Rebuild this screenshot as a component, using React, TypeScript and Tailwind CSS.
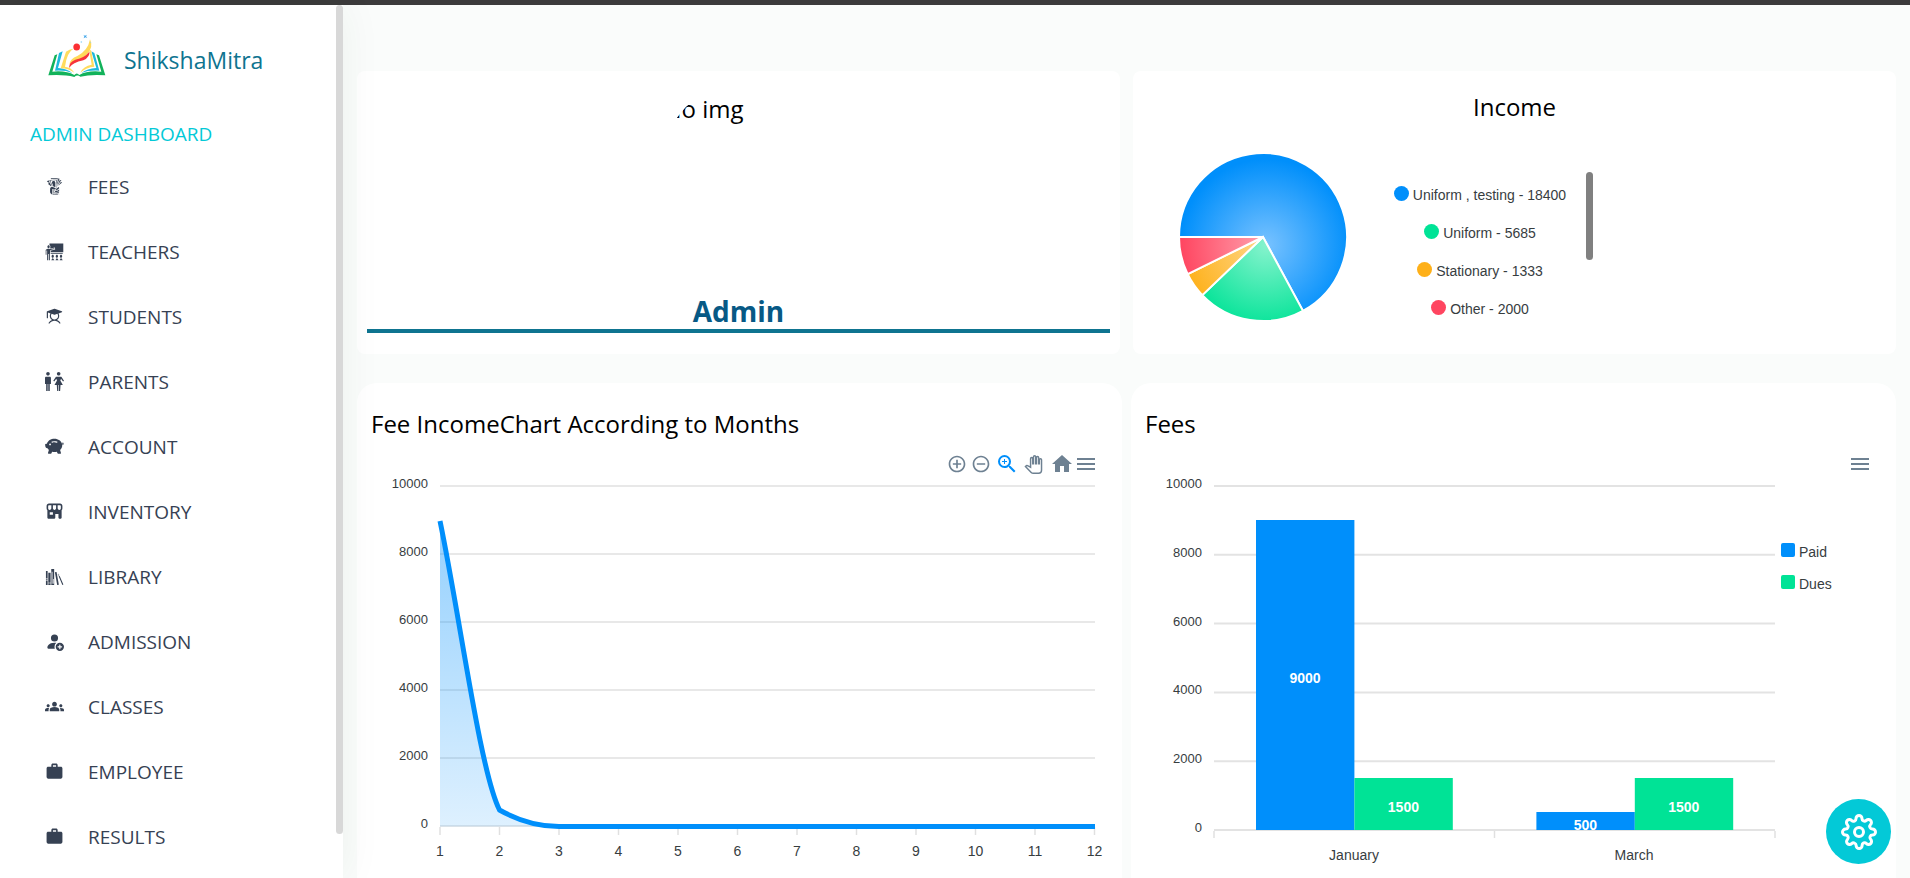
import React from "react";
import { GiBookshelf, GiTakeMyMoney, GiTeacher } from "react-icons/gi";
import { PiStudentFill } from "react-icons/pi";
import { ImManWoman } from "react-icons/im";
import { BsPersonFillAdd, BsPiggyBankFill } from "react-icons/bs";
import { MdAddCircleOutline, MdGroups, MdHome, MdMenu, MdRemoveCircleOutline, MdWork, MdZoomIn } from "react-icons/md";
import { BiSolidStoreAlt } from "react-icons/bi";
import { FiSettings } from "react-icons/fi";

const navItems = [
  { label: "FEES", Icon: GiTakeMyMoney },
  { label: "TEACHERS", Icon: GiTeacher },
  { label: "STUDENTS", Icon: PiStudentFill },
  { label: "PARENTS", Icon: ImManWoman },
  { label: "ACCOUNT", Icon: BsPiggyBankFill },
  { label: "INVENTORY", Icon: BiSolidStoreAlt },
  { label: "LIBRARY", Icon: GiBookshelf },
  { label: "ADMISSION", Icon: BsPersonFillAdd },
  { label: "CLASSES", Icon: MdGroups },
  { label: "EMPLOYEE", Icon: MdWork },
  { label: "RESULTS", Icon: MdWork },
];

function Logo() {
  return (
    <svg width="80" height="60" viewBox="0 0 240 180" aria-hidden="true" className="shrink-0">
      <path d="M44 88 L52 85 L37 137 Q78 133 103 147 Q110 138 118 147 Q142 133 184 137 L169 85 L177 88 L196 148 Q150 145 121 152 Q112 145 103 153 Q72 145 25 148 Z" fill="#12b25a" />
      <path d="M57 81 L68 76 L54 126 Q80 127 97 141 Q76 132 45 134 Z" fill="#1db9dc" />
      <path d="M163 81 L154 76 L169 126 Q142 127 124 141 Q146 132 178 134 Z" fill="#1db9dc" />
      <path d="M78 77 Q88 70 100 68 Q80 80 75 122 Q94 124 103 140 Q84 127 62 127 Z" fill="#ffdc5e" />
      <path d="M148 74 L153 72 L163 122 Q140 123 121 140 Q130 120 155 116 Z" fill="#ffdc5e" />
      <path d="M150 40 Q162 64 140 86 Q116 108 88 116 Q90 98 112 90 Q144 74 150 40 Z" fill="#ffd95a" />
      <path d="M148 77 Q151 92 130 103 Q98 109 87 126 Q87 108 106 101 Q134 95 148 77 Z" fill="#f7323a" />
      <ellipse cx="110" cy="63" rx="10" ry="10.500" fill="#fb2f33" />
      <path d="M130 26 L135 29 L141 26 L138 31 L142 36 L136 34 L131 37 L133 31 Z" fill="#41a6ea" />
      <circle cx="124" cy="48" r="2.500" fill="#8fd3f5" />
      <circle cx="152" cy="49" r="1.500" fill="#8fd3f5" />
    </svg>
  );
}

function Sidebar() {
  return (
    <aside className="relative z-10 flex w-[343px] shrink-0 bg-white shadow-[0_0_40px_rgba(20,60,40,0.06)]">
      <div className="min-w-0 flex-1 overflow-hidden">
        <a href="#home" className="mt-[21px] flex items-center gap-1 pl-10">
          <Logo />
          <span className="pt-2 text-[23px] leading-9 text-[#0e7490]">ShikshaMitra</span>
        </a>
        <h2 className="mt-[34px] pl-[30px] text-[19px] leading-7 text-[#03c9d7]">ADMIN DASHBOARD</h2>
        <nav className="mt-[6px]">
          {navItems.map(({ label, Icon }) => (
            <a key={label} href={"#" + label.toLowerCase()} className="flex h-[65px] items-center gap-6 pl-[45px] text-[19px] leading-7 text-gray-700">
              <Icon className="shrink-0" />
              <span>{label}</span>
            </a>
          ))}
        </nav>
      </div>
      <div className="h-[95%] w-[7px] rounded-full bg-[#d8d8d8]" />
    </aside>
  );
}

function ProfileCard() {
  return (
    <section className="rounded-lg bg-white px-[10px] pt-[14px] pb-[21px]">
      <div className="mx-auto h-[150px] w-[150px] overflow-hidden rounded-full pt-[6px] text-2xl leading-9">No img</div>
      <p className="mt-[58px] border-b-4 border-[#0e7490] text-center text-[28px] leading-9 font-bold text-[#075985]">Admin</p>
    </section>
  );
}

const income = [
  { name: "Uniform , testing", value: 18400, color: "#008ffb", tint: "#78c2ff", dot: "bg-[#008ffb]" },
  { name: "Uniform", value: 5685, color: "#00e396", tint: "#86f3cd", dot: "bg-[#00e396]" },
  { name: "Stationary", value: 1333, color: "#feb019", tint: "#ffd88c", dot: "bg-[#feb019]" },
  { name: "Other", value: 2000, color: "#ff4560", tint: "#ffa2af", dot: "bg-[#ff4560]" },
];

function Pie() {
  const total = income.reduce((sum, s) => sum + s.value, 0);
  const point = (turn: number) => {
    const a = turn * 2 * Math.PI - Math.PI;
    return `${(84 * Math.cos(a)).toFixed(2)} ${(84 * Math.sin(a)).toFixed(2)}`;
  };
  let start = 0;
  return (
    <svg width="170" height="170" viewBox="-85 -85 170 170" role="img" aria-label="Income by category">
      {income.map((s, i) => {
        const end = start + s.value / total;
        const d = `M0 0 L${point(start)} A84 84 0 ${end - start > 0.5 ? 1 : 0} 1 ${point(end)} Z`;
        start = end;
        return (
          <g key={s.name}>
            <radialGradient id={"slice" + i} gradientUnits="userSpaceOnUse" cx="3" cy="8" r="86">
              <stop offset="0" stopColor={s.tint} />
              <stop offset="1" stopColor={s.color} />
            </radialGradient>
            <path d={d} fill={`url(#slice${i})`} stroke="#fff" strokeWidth="2" />
          </g>
        );
      })}
    </svg>
  );
}

function IncomeCard() {
  return (
    <section className="rounded-lg bg-white pt-[18px]">
      <h2 className="text-center text-2xl leading-9">Income</h2>
      <div className="mt-[27px] flex items-start pl-[45px] font-['Liberation_Sans',Arial,sans-serif]">
        <Pie />
        <ul className="mt-6 ml-[26px] flex w-[212px] flex-col items-center text-sm text-[#373d3f]">
          {income.map((s) => (
            <li key={s.name} className="flex h-[38px] items-center gap-1">
              <span className={"mb-1 h-[15px] w-[15px] rounded-full " + s.dot} />
              {s.name} - {s.value}
            </li>
          ))}
        </ul>
        <div className="mt-5 h-[88px] w-[7px] rounded-full bg-[#808080]" />
      </div>
    </section>
  );
}

function ToolButton({ label, className = "", children }: { label: string; className?: string; children: React.ReactNode }) {
  return (
    <button type="button" aria-label={label} className={"flex h-6 w-6 items-center justify-center " + className}>
      {children}
    </button>
  );
}

const ticks = [10000, 8000, 6000, 4000, 2000, 0];

function LineChart() {
  return (
    <svg viewBox="0 0 737 430" className="block h-auto w-full font-['Liberation_Sans',Arial,sans-serif]" role="img" aria-label="Fee income by month">
      <defs>
        <linearGradient id="area" x1="0" y1="0" x2="0" y2="1">
          <stop offset="0" stopColor="#008ffb" stopOpacity="0.42" />
          <stop offset="1" stopColor="#008ffb" stopOpacity="0.13" />
        </linearGradient>
      </defs>
      {ticks.map((t, i) => (
        <g key={t}>
          <line x1="69" x2="724" y1={10 + i * 68} y2={10 + i * 68} stroke="#e8e8e8" strokeWidth="2" />
          <text x="57" y={12 + i * 68} textAnchor="end" fontSize="13" fill="#373d3f">{t}</text>
        </g>
      ))}
      {Array.from({ length: 12 }, (_, i) => (
        <g key={i}>
          <line x1={69 + i * 59.5} x2={69 + i * 59.5} y1="351" y2="359" stroke="#e0e0e0" strokeWidth="1.500" />
          <text x={69 + i * 59.5} y="380" textAnchor="middle" fontSize="14" fill="#373d3f">{i + 1}</text>
        </g>
      ))}
      <path d="M69 45 C89 141 109 295 128.500 334 C148 345 168 350.500 188 350.500 H69 Z" fill="url(#area)" />
      <path d="M69 45 C89 141 109 295 128.500 334 C148 345 168 350.500 188 350.500 H724" fill="none" stroke="#008ffb" strokeWidth="5" />
    </svg>
  );
}

const feeBars = [
  { x: 111, top: 44, value: 9000, labelY: 207, color: "#008ffb" },
  { x: 209.4, top: 302, value: 1500, labelY: 336, color: "#00e396" },
  { x: 391.4, top: 336, value: 500, labelY: 354, color: "#008ffb" },
  { x: 489.8, top: 302, value: 1500, labelY: 336, color: "#00e396" },
];

function BarChart() {
  return (
    <svg viewBox="0 0 737 430" className="block h-auto w-full font-['Liberation_Sans',Arial,sans-serif]" role="img" aria-label="Paid and due fees by month">
      <clipPath id="plot">
        <rect x="69" y="0" width="561" height="354" />
      </clipPath>
      {ticks.map((t, i) => (
        <g key={t}>
          <line x1="69" x2="630" y1={10 + i * 68.8} y2={10 + i * 68.8} stroke="#e3e3e3" strokeWidth="2" />
          <text x="57" y={12 + i * 68.8} textAnchor="end" fontSize="13" fill="#373d3f">{t}</text>
        </g>
      ))}
      {[69, 349.5, 630].map((x) => (
        <line key={x} x1={x} x2={x} y1="355" y2="362" stroke="#e0e0e0" strokeWidth="1.500" />
      ))}
      <g clipPath="url(#plot)">
        {feeBars.map((b) => (
          <g key={b.x}>
            <rect x={b.x} y={b.top} width="98.400" height={354 - b.top} fill={b.color} />
            <text x={b.x + 49} y={b.labelY} textAnchor="middle" fontSize="14" fontWeight="bold" fill="#fff">{b.value}</text>
          </g>
        ))}
      </g>
      <g fontSize="14" fill="#373d3f">
        <text x="209" y="384" textAnchor="middle">January</text>
        <text x="489" y="384" textAnchor="middle">March</text>
        <rect x="636" y="67" width="14" height="14" rx="2" fill="#008ffb" />
        <text x="654" y="81">Paid</text>
        <rect x="636" y="99" width="14" height="14" rx="2" fill="#00e396" />
        <text x="654" y="113">Dues</text>
      </g>
    </svg>
  );
}

function ChartCard({ title, tools, children }: { title: string; tools: React.ReactNode; children: React.ReactNode }) {
  return (
    <section className="rounded-[20px] bg-white px-[14px] pt-[23px]">
      <h2 className="text-2xl leading-9">{title}</h2>
      <div className="mt-[10px] flex justify-end pr-[10px] text-2xl text-[#6e8192]">{tools}</div>
      {children}
    </section>
  );
}

export default function App() {
  return (
    <div className="flex h-screen flex-col bg-[#fafcfb] font-['Open_Sans',sans-serif] text-black">
      <div className="h-[5px] shrink-0 bg-[#3c3b3c]" />
      <div className="flex min-h-0 flex-1">
        <Sidebar />
        <main className="min-w-0 flex-1 overflow-y-auto px-[14px] pt-[66px] [scrollbar-width:none]">
          <div className="grid grid-cols-2 gap-[13px]">
            <ProfileCard />
            <IncomeCard />
          </div>
          <div className="mt-[29px] grid grid-cols-2 gap-[9px]">
            <ChartCard
              title="Fee IncomeChart According to Months"
              tools={
                <>
                  <ToolButton label="Zoom in"><MdAddCircleOutline size={20} /></ToolButton>
                  <ToolButton label="Zoom out" className="mr-0.5"><MdRemoveCircleOutline size={20} /></ToolButton>
                  <ToolButton label="Selection zoom" className="mr-0.5 text-[#008ffb]"><MdZoomIn /></ToolButton>
                  <ToolButton label="Pan" className="mr-[5px]">
                    <svg width="19" height="19" viewBox="-1 -1 26 26" fill="#fff" stroke="currentColor" strokeWidth="2">
                      <path d="M23 5.500V20c0 2.200-1.800 4-4 4h-7.300c-1.080 0-2.100-.43-2.850-1.190L1 14.830s1.260-1.230 1.300-1.250c.22-.19.49-.29.79-.29.22 0 .42.06.6.16.04.01 4.310 2.460 4.310 2.460V4c0-.83.67-1.500 1.500-1.500S11 3.170 11 4v7h1V1.500c0-.83.67-1.500 1.500-1.500S15 .67 15 1.500V11h1V2.500c0-.83.67-1.500 1.500-1.500s1.500.67 1.500 1.500V11h1V5.500c0-.83.67-1.500 1.500-1.500s1.500.67 1.500 1.500z" />
                    </svg>
                  </ToolButton>
                  <ToolButton label="Reset zoom"><MdHome /></ToolButton>
                  <ToolButton label="Menu"><MdMenu /></ToolButton>
                </>
              }
            >
              <LineChart />
            </ChartCard>
            <ChartCard title="Fees" tools={<ToolButton label="Menu"><MdMenu /></ToolButton>}>
              <BarChart />
            </ChartCard>
          </div>
        </main>
      </div>
      <button type="button" aria-label="Settings" className="fixed right-[19px] bottom-[14px] z-20 flex h-[65px] w-[65px] items-center justify-center rounded-full bg-[#03c9d7] text-white">
        <FiSettings size={36} />
      </button>
    </div>
  );
}
